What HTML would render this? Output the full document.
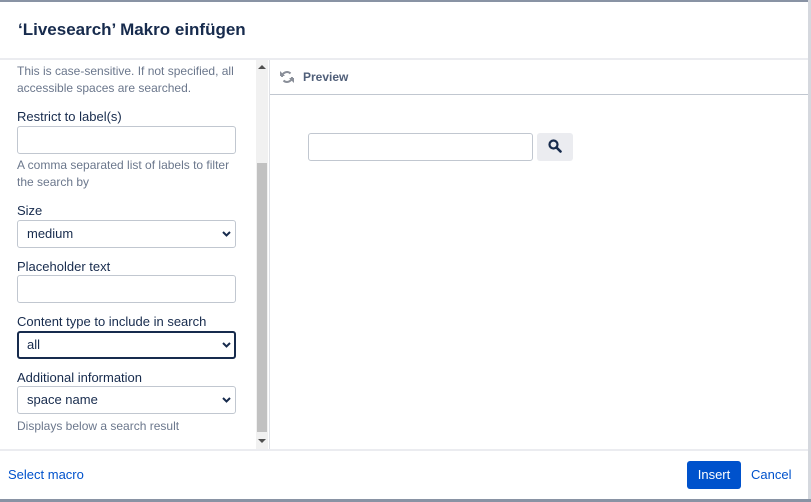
<!DOCTYPE html>
<html><head><meta charset="utf-8"><style>
*{box-sizing:border-box;margin:0;padding:0}
body{width:811px;height:502px;overflow:hidden;background:#fff;font-family:"Liberation Sans",Arial,sans-serif;position:relative;color:#172b4d}
.abs{position:absolute}
.lbl{position:absolute;left:17px;font-size:13px;color:#172b4d}
.hint{position:absolute;left:17px;font-size:12px;color:#6b778c;line-height:17px}
.inp{position:absolute;left:17px;width:219px;height:28px;border:1px solid #c1c7d0;border-radius:3px;background:#fff;font-size:13px;padding-left:9px;line-height:26px;color:#172b4d}
.sel svg{position:absolute;right:4px;top:10px}
</style></head><body>
<div class="abs" style="left:0;top:0;width:811px;height:2px;background:#8993a4"></div>
<div class="abs" style="right:0;top:0;width:3px;height:502px;background:#d5d8de"></div>
<div class="abs" style="left:18px;top:20px;font-size:17px;font-weight:bold;color:#172b4d">‘Livesearch’ Makro einfügen</div>
<div class="abs" style="left:0;top:58px;width:808px;height:2px;background:#ebecf0"></div>

<div class="hint" style="top:63px">This is case-sensitive. If not specified, all<br>accessible spaces are searched.</div>
<div class="lbl" style="top:109px">Restrict to label(s)</div>
<div class="inp" style="top:126px"></div>
<div class="hint" style="top:157px">A comma separated list of labels to filter<br>the search by</div>
<div class="lbl" style="top:203px">Size</div>
<div class="inp sel" style="top:220px">medium<svg width="9" height="6" viewBox="0 0 9 6"><path d="M1 1l3.5 3.5L8 1" stroke="#172b4d" stroke-width="2" fill="none"/></svg></div>
<div class="lbl" style="top:259px">Placeholder text</div>
<div class="inp" style="top:275px"></div>
<div class="lbl" style="top:314px">Content type to include in search</div>
<div class="inp sel" style="top:331px;border:2px solid #172b4d;padding-left:8px;line-height:24px">all<svg width="9" height="6" viewBox="0 0 9 6" style="top:9px;right:3px"><path d="M1 1l3.5 3.5L8 1" stroke="#172b4d" stroke-width="2" fill="none"/></svg></div>
<div class="lbl" style="top:370px">Additional information</div>
<div class="inp sel" style="top:386px">space name<svg width="9" height="6" viewBox="0 0 9 6"><path d="M1 1l3.5 3.5L8 1" stroke="#172b4d" stroke-width="2" fill="none"/></svg></div>
<div class="hint" style="top:418px">Displays below a search result</div>

<div class="abs" style="left:256px;top:60px;width:12px;height:390px;background:#f1f1f1"></div>
<div class="abs" style="left:257px;top:163px;width:10px;height:269px;background:#c1c1c1"></div>
<svg class="abs" style="left:258px;top:64px" width="8" height="6"><path d="M0 5h8L4 1z" fill="#505050"/></svg>
<svg class="abs" style="left:258px;top:438px" width="8" height="6"><path d="M0 1h8L4 5z" fill="#505050"/></svg>
<div class="abs" style="left:269px;top:60px;width:1px;height:390px;background:#dfe1e6"></div>

<svg class="abs" style="left:279px;top:69px" width="16" height="16" viewBox="0 0 16 16"><path d="M3 8a5 5 0 0 1 8.5-3.5M13 8a5 5 0 0 1-8.5 3.5" stroke="#8a8f99" stroke-width="2" fill="none"/><path d="M1 2v5h5z M15 14v-5h-5z" fill="#8a8f99"/></svg>
<div class="abs" style="left:303px;top:70px;font-size:12px;font-weight:bold;color:#505f79">Preview</div>
<div class="abs" style="left:270px;top:94px;width:538px;height:1px;background:#c1c7d0"></div>
<div class="abs" style="left:308px;top:133px;width:225px;height:28px;border:1px solid #c1c7d0;border-radius:3px"></div>
<div class="abs" style="left:537px;top:133px;width:36px;height:28px;background:#ebecf0;border-radius:3px"></div>
<svg class="abs" style="left:548px;top:139px" width="14" height="14" viewBox="0 0 14 14"><circle cx="5.5" cy="5.5" r="4" stroke="#172b4d" stroke-width="2.2" fill="none"/><path d="M8.5 8.5l4 4" stroke="#172b4d" stroke-width="2.6" stroke-linecap="round"/></svg>

<div class="abs" style="left:0;top:449px;width:808px;height:2px;background:#ebecf0"></div>
<div class="abs" style="left:8px;top:467px;font-size:13px;color:#0052cc">Select macro</div>
<div class="abs" style="left:687px;top:461px;width:54px;height:28px;background:#0052cc;border-radius:3px;color:#fff;font-size:13px;text-align:center;line-height:28px">Insert</div>
<div class="abs" style="left:751px;top:467px;font-size:13px;color:#0052cc">Cancel</div>
<div class="abs" style="left:0;top:499px;width:811px;height:3px;background:#8993a4"></div>
</body></html>
